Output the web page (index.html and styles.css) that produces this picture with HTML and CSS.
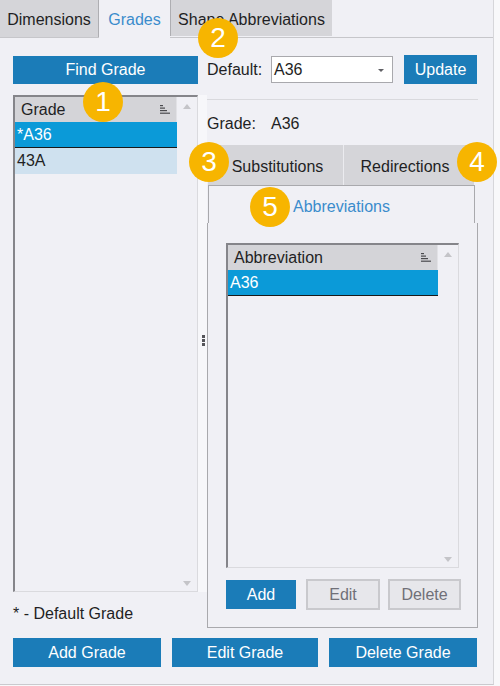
FILE: index.html
```html
<!doctype html>
<html>
	<head>
		<title>Grades</title>
		<meta charset="utf-8" />
		<meta name="viewport" content="width=device-width, initial-scale=1" />
		<link rel="stylesheet" href="styles.css">
	</head>

	<body>

		<div id="window">

			<!-- top level tabs -->
			<div class="tabs">
				<div class="tab tab_dim">Dimensions</div>
				<div class="tab tab_active">Grades</div>
				<div class="tab tab_shape">Shape Abbreviations</div>
			</div>

			<div class="page">

				<div class="left_col">
					<div class="button find_button">Find Grade</div>

					<div class="grid_list grade_list">
						<div class="list_body">
							<div class="list_header">Grade <span class="sort_icon"><svg width="10" height="9" viewBox="0 0 10 9"><rect x="0" y="0" width="3" height="1.2" fill="#4a4a4e"/><rect x="0" y="2.5" width="5" height="1.2" fill="#4a4a4e"/><rect x="0" y="5" width="7" height="1.2" fill="#4a4a4e"/><rect x="0" y="7.6" width="10" height="1.2" fill="#4a4a4e"/></svg></span></div>
							<div class="list_row selected">*A36</div>
							<div class="list_row light">43A</div>
						</div>
						<div class="vscroll">
							<span class="arrow_up"></span>
							<span class="arrow_down"></span>
						</div>
					</div>

					<p class="note">* - Default Grade</p>
				</div>

				<div class="splitter"><span class="grip"></span></div>

				<div class="right_col">
					<div class="default_row">
						<span class="label">Default:</span>
						<div class="combo">A36<span class="combo_arrow"></span></div>
						<div class="button update_button">Update</div>
					</div>

					<div class="separator"></div>

					<div class="grade_row"><span class="label">Grade:</span>A36</div>

					<!-- grade sub tabs -->
					<div class="subtabs">
						<div class="subtab_row">
							<div class="subtab subtab_subst">Substitutions</div>
							<div class="subtab subtab_redir">Redirections</div>
						</div>
						<div class="subtab_selected">Abbreviations</div>
						<div class="subpage">
							<div class="grid_list abbrev_list">
								<div class="list_body">
									<div class="list_header">Abbreviation <span class="sort_icon"><svg width="10" height="9" viewBox="0 0 10 9"><rect x="0" y="0" width="3" height="1.2" fill="#4a4a4e"/><rect x="0" y="2.5" width="5" height="1.2" fill="#4a4a4e"/><rect x="0" y="5" width="7" height="1.2" fill="#4a4a4e"/><rect x="0" y="7.6" width="10" height="1.2" fill="#4a4a4e"/></svg></span></div>
									<div class="list_row selected">A36</div>
								</div>
								<div class="vscroll">
									<span class="arrow_up"></span>
									<span class="arrow_down"></span>
								</div>
							</div>
							<div class="abbrev_buttons">
								<div class="button add_button">Add</div>
								<div class="button disabled edit_button">Edit</div>
								<div class="button disabled delete_button">Delete</div>
							</div>
						</div>
					</div>
				</div>

				<div class="actions">
					<div class="button action_button">Add Grade</div>
					<div class="button action_button edit_grade">Edit Grade</div>
					<div class="button action_button">Delete Grade</div>
				</div>

			</div>

			<!-- numbered callouts -->
			<div class="badge badge_1">1</div>
			<div class="badge badge_2">2</div>
			<div class="badge badge_3">3</div>
			<div class="badge badge_4">4</div>
			<div class="badge badge_5">5</div>

		</div>

	</body>
</html>
```

FILE: styles.css
```css
body {
	margin: 0;
	background-color: #f8f8fa;
	font-family: "Liberation Sans", Arial, sans-serif;
	font-size: 16px;
	color: #1f1f24;
}

#window {
	position: relative;
	width: 493px;
	height: 684px;
	background-color: #f0f0f5;
	border-right: 1px solid #d6d6da;
	border-bottom: 1px solid #cacace;
}

/* top tabs */

.tabs {
	display: flex;
	height: 37px;
	border-bottom: 1px solid #c6c6ca;
}

.tab {
	display: flex;
	align-items: center;
	justify-content: center;
	background-color: #d5d5d9;
	height: 37px;
	padding-top: 3px;
	box-sizing: border-box;
}

.tab_dim {
	width: 99px;
	border-right: 1px solid #aeaeb2;
}

.tab_active {
	width: 71px;
	height: 38px;
	background-color: #f0f0f5;
	color: #3b8ccc;
	padding-top: 1px;
}

.tab_shape {
	width: 162px;
	height: 36px;
	border-left: 1px solid #aeaeb2;
}

/* page */

.page {
	display: grid;
	grid-template-columns: 185px 9px 271px;
	padding: 17px 0 0 13px;
}

.button {
	display: flex;
	align-items: center;
	justify-content: center;
	background-color: #1b7cb8;
	color: #ffffff;
	box-sizing: border-box;
	flex-shrink: 0;
}

.button.disabled {
	background-color: #e7e7eb;
	border: 2px solid #c9c9cd;
	color: #707078;
}

.left_col {
	padding-top: 1px;
}

.find_button {
	height: 28px;
}

.grid_list {
	display: flex;
	box-sizing: border-box;
	border-top: 2px solid #85858a;
	border-left: 2px solid #85858a;
	border-right: 1px solid #dadade;
	border-bottom: 1px solid #dadade;
}

.grade_list {
	margin-top: 11px;
	height: 497px;
}

.list_body {
	flex: 1;
}

.list_header {
	display: flex;
	align-items: center;
	justify-content: space-between;
	height: 25px;
	padding: 0 6px 0 6px;
	background-color: #d4d4d8;
	border-right: 1px solid #e2e2e6;
}

.sort_icon {
	display: flex;
}

.list_row {
	height: 26px;
	line-height: 26px;
	padding-left: 2px;
	box-sizing: border-box;
}

.list_row.selected {
	background-color: #0b9ad8;
	color: #ffffff;
	border-bottom: 1px solid #1a1a1a;
}

.list_row.light {
	background-color: #cfe1ef;
}

.vscroll {
	position: relative;
	width: 20px;
}

.arrow_up,
.arrow_down {
	position: absolute;
	left: 6px;
	width: 0;
	height: 0;
	border-left: 4px solid transparent;
	border-right: 4px solid transparent;
}

.arrow_up {
	top: 7px;
	border-bottom: 5px solid #c4c4c8;
}

.arrow_down {
	bottom: 5px;
	border-top: 5px solid #c4c4c8;
}

.note {
	margin: 12px 0 0 0;
	line-height: 20px;
}

.splitter {
	position: relative;
	margin-top: 40px;
	height: 497px;
	background-color: #f7f7fa;
}

.grip {
	position: absolute;
	left: 4px;
	top: 240px;
	width: 3px;
	height: 11px;
	background: repeating-linear-gradient(#55555a 0 3px, transparent 3px 4px);
}

/* right side */

.default_row {
	display: flex;
	align-items: center;
	height: 29px;
}

.label {
	display: inline-block;
	width: 64px;
}

.combo {
	position: relative;
	width: 122px;
	height: 27px;
	line-height: 25px;
	padding-left: 2px;
	box-sizing: border-box;
	background-color: #ffffff;
	border: 1px solid #a9a9ad;
}

.combo_arrow {
	position: absolute;
	right: 8px;
	top: 12px;
	border-left: 3px solid transparent;
	border-right: 3px solid transparent;
	border-top: 3px solid #606065;
}

.update_button {
	width: 73px;
	height: 29px;
	margin-left: 11px;
}

.separator {
	height: 1px;
	margin-top: 15px;
	background-color: #d9d9dd;
}

.grade_row {
	margin-top: 14px;
	line-height: 20px;
}

.subtabs {
	margin-top: 11px;
}

.subtab_row {
	display: flex;
	margin-left: 1px;
	width: 266px;
	height: 40px;
}

.subtab {
	display: flex;
	align-items: center;
	justify-content: center;
	background-color: #d5d5d9;
	padding-top: 4px;
	box-sizing: border-box;
}

.subtab_subst {
	width: 136px;
	border-right: 1px solid #ebebef;
	padding-left: 4px;
}

.subtab_redir {
	width: 130px;
	padding-right: 8px;
}

.subtab_selected {
	display: flex;
	align-items: center;
	justify-content: center;
	margin-left: 1px;
	width: 267px;
	height: 38px;
	box-sizing: border-box;
	border: 1px solid #a9a9ad;
	border-bottom: none;
	color: #3b8ccc;
	padding-top: 4px;
}

.subpage {
	width: 271px;
	box-sizing: border-box;
	border: 1px solid #a9a9ad;
	border-top: none;
	padding: 20px 17px 17px 18px;
}

.abbrev_list {
	width: 233px;
	height: 325px;
}

.abbrev_buttons {
	display: flex;
	align-items: center;
	margin-top: 11px;
	height: 31px;
}

.add_button {
	width: 70px;
	height: 29px;
}

.edit_button {
	width: 74px;
	height: 31px;
	margin-left: 10px;
}

.delete_button {
	width: 73px;
	height: 31px;
	margin-left: 8px;
}

/* bottom buttons */

.actions {
	grid-column: 1 / -1;
	display: flex;
	gap: 11px;
	margin-top: 10px;
}

.action_button {
	width: 148px;
	height: 29px;
}

.edit_grade {
	width: 146px;
}

/* callouts */

.badge {
	position: absolute;
	width: 40px;
	height: 40px;
	border-radius: 50%;
	background-color: #f7b500;
	color: #ffffff;
	font-size: 28px;
	line-height: 40px;
	text-align: center;
}

.badge_1 { left: 83px; top: 82px; }
.badge_2 { left: 198px; top: 18px; }
.badge_3 { left: 189px; top: 142px; }
.badge_4 { left: 457px; top: 142px; }
.badge_5 { left: 250px; top: 187px; }
```
